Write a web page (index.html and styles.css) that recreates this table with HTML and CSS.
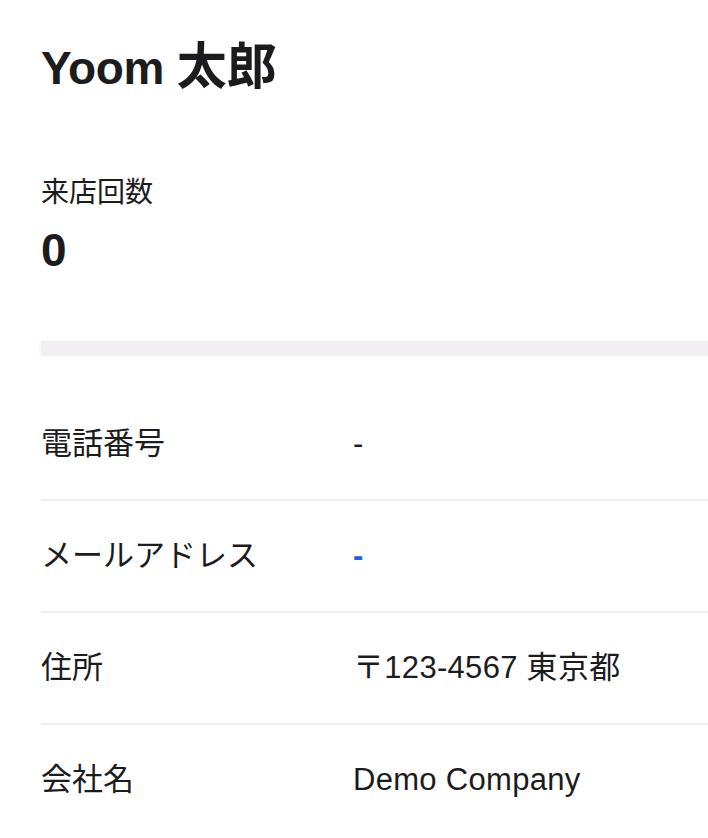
FILE: index.html
```html
<!DOCTYPE html>
<html lang="ja">
<head>
<meta charset="utf-8">
<link rel="stylesheet" href="styles.css">
</head>
<body>
<div class="page">
  <h1 class="name">Yoom <span class="name-ja">太郎</span></h1>
  <div class="stat">
    <div class="stat-label">来店回数</div>
    <div class="stat-value">0</div>
  </div>
  <div class="separator"></div>
  <div class="rows">
    <div class="row"><div class="row-label">電話番号</div><div class="row-value">-</div></div>
    <div class="row"><div class="row-label">メールアドレス</div><div class="row-value link">-</div></div>
    <div class="row"><div class="row-label">住所</div><div class="row-value">〒123-4567 東京都</div></div>
    <div class="row last"><div class="row-label">会社名</div><div class="row-value">Demo Company</div></div>
  </div>
</div>
</body>
</html>
```
FILE: styles.css
```css
html, body {
  margin: 0;
  padding: 0;
  background: #ffffff;
}
body {
  font-family: "Liberation Sans", "Noto Sans CJK JP", sans-serif;
  color: #1c1c1e;
  width: 708px;
  overflow: hidden;
}
.page {
  padding-left: 41px;
}
.name {
  margin: 0;
  padding-top: 39px;
  font-size: 46px;
  line-height: 56px;
  font-weight: 700;
  letter-spacing: -0.3px;
}
.name-ja {
  font-size: 50px;
  letter-spacing: 0;
}
.stat {
  margin-top: 80px;
}
.stat-label {
  font-size: 28px;
  line-height: 34px;
}
.stat-value {
  margin-top: 14px;
  font-size: 46px;
  line-height: 52px;
  font-weight: 700;
}
.separator {
  margin-top: 65px;
  height: 15px;
  background: #f2eff3;
  box-shadow: 0 0 3px 1px #f5f3f6;
}
.rows {
  margin-top: 33px;
}
.row {
  display: grid;
  grid-template-columns: 312px 1fr;
  align-items: center;
  height: 110px;
  border-bottom: 2px solid #efefef;
  font-size: 31px;
}
.row.last {
  border-bottom: none;
}
.row-label, .row-value {
  line-height: 36px;
}
.row-value {
  letter-spacing: 0.3px;
}
.link {
  color: #1a62e6;
  font-weight: 700;
}
```
